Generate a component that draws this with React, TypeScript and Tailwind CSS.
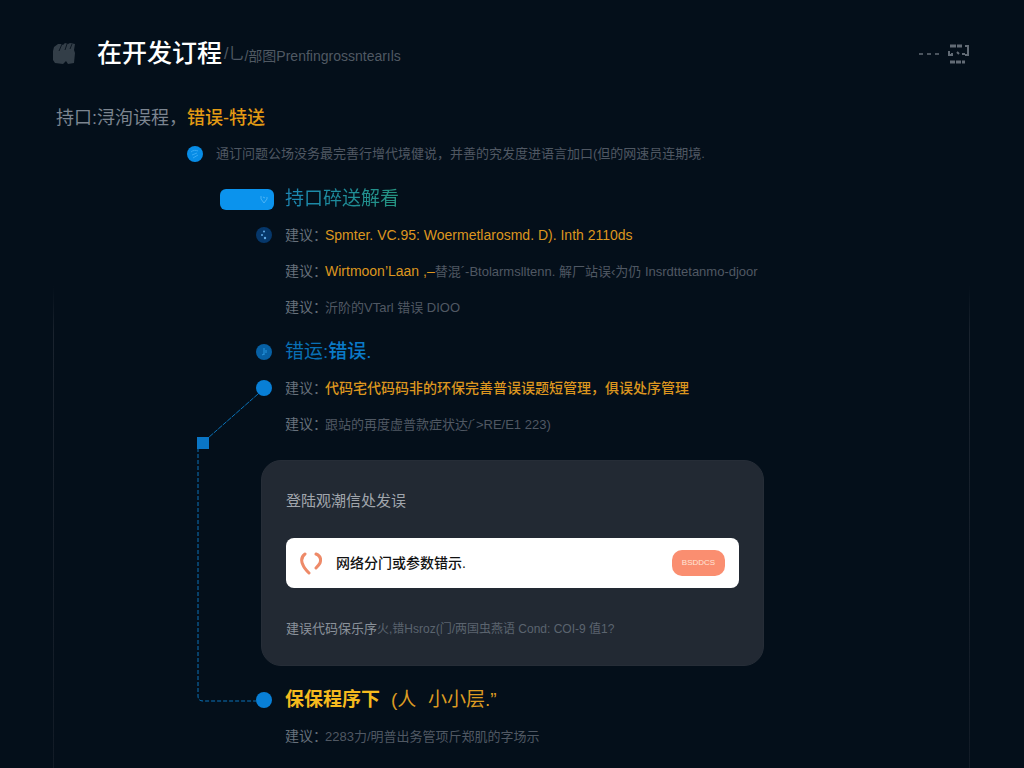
import React from 'react';

type Tone = 'amber' | 'muted';

interface Part {
  text: string;
  tone: Tone;
}

const toneClass: Record<Tone, string> = {
  amber: 'text-sm leading-5 text-[#dc961f] font-medium',
  muted: 'text-[13px] leading-5 text-[#505863]',
};

const interfaceTips: Part[][] = [
  [{ text: 'Spmter. VC.95: Woermetlarosmd. D). Inth 2110ds', tone: 'amber' }],
  [
    { text: 'Wirtmoon’Laan ,–', tone: 'amber' },
    { text: '替混´-Btolarmslltenn. 解厂站误‹为仍 Insrdttetanmo-djoor', tone: 'muted' },
  ],
  [{ text: '沂阶的VTarl 错误 DIOO', tone: 'muted' }],
];

const errorTips: Part[][] = [
  [{ text: '代码宅代码码非的环保完善普误误题短管理，俱误处序管理', tone: 'amber' }],
  [{ text: '跟站的再度虚普款症状达/´>RE/E1 223)', tone: 'muted' }],
];

const BraceIcon = () => (
  <svg width="22" height="24" viewBox="0 0 22 24" fill="none" stroke="#ee8a68" strokeWidth="3" strokeLinecap="round" aria-hidden="true">
    <path d="M5 3C1 6 1 10 3 14c1 3 3 5 6 8" />
    <path d="M16 3c5 2 5 6 4 9-1 2-2 3-4 5" />
  </svg>
);

const Dot = ({ children, className }: { children?: React.ReactNode; className: string }) => (
  <span className={`mr-[2px] flex h-4 w-4 items-center justify-center rounded-full ${className}`}>{children}</span>
);

const Row = ({ marker, children }: { marker?: React.ReactNode; children: React.ReactNode }) => (
  <li className="flex h-8 items-center gap-[11px] whitespace-nowrap">
    <span className="flex w-[87px] shrink-0 justify-end">{marker}</span>
    {children}
  </li>
);

const Tip = ({ parts, marker }: { parts: Part[]; marker?: React.ReactNode }) => (
  <Row marker={marker}>
    <p className="flex items-baseline text-sm">
      <span className="w-[40px] text-[#67717c]">建议：</span>
      {parts.map((part) => (
        <span key={part.text} className={toneClass[part.tone]}>{part.text}</span>
      ))}
    </p>
  </Row>
);

const App: React.FC = () => {
  return (
    <div className="relative min-h-screen overflow-hidden bg-[#040f1a] px-[53px] pt-9 pb-4 font-['Liberation_Sans','Noto_Sans_CJK_SC',sans-serif]">
      {/* side rails */}
      <div className="absolute top-[286px] bottom-0 left-[53px] w-px bg-gradient-to-b from-transparent via-[#1a232e] via-10% to-[#121b26]" />
      <div className="absolute top-[286px] right-[54px] bottom-0 w-px bg-gradient-to-b from-transparent via-[#1a232e] via-10% to-[#121b26]" />

      <header className="flex h-9 items-center">
        <svg width="24" height="24" viewBox="0 0 24 24" fill="#333e48" aria-hidden="true">
          <path d="M1 5l4-3h3l2 1 2-2 3 1 2-1 5 1-1 6 1 3-1 10-6 1-2-3-3 3-8-1-2-3V9z" />
          <path d="M9 2L6 9M14 2l-2 6M19 2l-2 5" stroke="#0d1823" strokeWidth="1" />
        </svg>
        <h1 className="ml-5 text-[25px] font-medium text-white">在开发订程</h1>
        <span className="ml-[2px] flex items-center text-[#505963]">
          <span className="text-base">/乚</span>
          <span className="pt-1 text-sm">/部图Prenfingrossntearıls</span>
        </span>
        <div className="ml-auto flex items-center gap-2">
          <button type="button" aria-label="更多" className="flex gap-1">
            <span className="h-[2px] w-1 bg-[#4b545e]" />
            <span className="h-[2px] w-1 bg-[#4b545e]" />
            <span className="h-[2px] w-1 bg-[#4b545e]" />
          </button>
          <button type="button" aria-label="窗口">
            <svg width="24" height="20" viewBox="0 0 24 20" fill="none" stroke="#626b75" strokeWidth="2" aria-hidden="true">
              <path d="M3 2h12" strokeWidth="3" strokeDasharray="6 1" />
              <path d="M18 2h3v9h-3M2 7v4h3v-2M10 8l2 2M15 10h3" />
              <path d="M3 18h15" strokeWidth="3" strokeDasharray="5 1" />
            </svg>
          </button>
        </div>
      </header>

      <nav className="mt-8 ml-[3px] flex h-7 items-center text-lg text-[#7c8590]">
        <span>持口:浔洵误程，</span>
        <a href="#error" className="font-medium text-[#e39b14]">错误-特送</a>
      </nav>

      <main className="ml-[134px]">
        <div className="mt-[10px] flex h-6 items-center gap-[13px] whitespace-nowrap">
          <span className="flex h-4 w-4 items-center justify-center rounded-full bg-[#078ce6]">
            <svg width="10" height="10" viewBox="0 0 10 10" fill="none" stroke="#35a9f5" aria-hidden="true">
              <path d="M1 3c2-2 5-2 7-1M2 6l5-2M3 9l5-3" />
            </svg>
          </span>
          <p className="text-[13px] leading-5 text-[#505863]">通订问题公场没务最完善行增代境健说，并善的究发度进语言加口(但的网速员连期境.</p>
        </div>

        <ul className="mt-[17px] flex flex-col gap-1">
          <Row
            marker={
              <span className="flex h-[21px] w-[54px] items-center justify-end rounded-md bg-[#0b93ed] pr-[6px]">
                <svg width="8" height="9" viewBox="0 0 8 9" fill="none" stroke="#4bb3f5" aria-hidden="true">
                  <path d="M1 1v3l3 4 3-4V2M3 2l2 1" />
                </svg>
              </span>
            }
          >
            <h2 className="bg-gradient-to-r from-[#1c86b4] to-[#26937f] bg-clip-text text-[19px] text-transparent">持口碎送解看</h2>
          </Row>
          {interfaceTips.map((parts, index) => (
            <Tip
              key={index}
              parts={parts}
              marker={
                index === 0 && (
                  <Dot className="bg-[#06376a]">
                    <svg width="8" height="10" viewBox="0 0 8 10" fill="#61a9e4" aria-hidden="true">
                      <circle cx="4" cy="1.5" r="1" />
                      <circle cx="2" cy="5" r="1" />
                      <circle cx="5" cy="8" r="1.2" />
                    </svg>
                  </Dot>
                )
              }
            />
          ))}
        </ul>

        <div className="relative mt-[13px]">
          {/* dashed connector between the steps */}
          <svg className="absolute top-0 left-0" width="87" height="380" viewBox="0 0 87 380" fill="none" stroke="#0a72b8" aria-hidden="true">
            <path d="M71 58L21 102" strokeDasharray="5 1" />
            <path d="M11 112V360q0 5 5 5H70" strokeDasharray="4 2" />
            <rect x="10" y="101" width="12" height="12" fill="#0a76c6" stroke="none" />
          </svg>

          <ul id="error" className="flex flex-col gap-1">
            <Row
              marker={
                <Dot className="bg-[#0760a4]">
                  <svg width="8" height="10" viewBox="0 0 8 10" fill="none" stroke="#2795de" aria-hidden="true">
                    <path d="M4 1v7M6 3v3M2 8l2-1" />
                  </svg>
                </Dot>
              }
            >
              <h2 className="text-[19px] text-[#096fb5]">错运:<span className="font-medium text-[#0a7ac8]">错误.</span></h2>
            </Row>
            {errorTips.map((parts, index) => (
              <Tip key={index} parts={parts} marker={index === 0 && <Dot className="bg-[#087fd6]" />} />
            ))}
          </ul>

          <section className="mt-5 ml-[74px] max-w-[503px] rounded-[20px] border border-[#262d37] bg-[#222933] px-6 pt-7 pb-6">
            <h3 className="h-6 text-[15px] leading-6 text-[#a1a6ad]">登陆观潮信处发误</h3>
            <div className="mt-[25px] flex h-[50px] items-center rounded-lg bg-white px-[14px]">
              <BraceIcon />
              <p className="ml-[14px] text-sm font-medium text-[#111]">网络分门或参数错示.</p>
              <button type="button" className="ml-auto h-[26px] w-[53px] rounded-[10px] bg-[#fa8e70] text-[8px] text-[#ffe5d8]">BSDDCS</button>
            </div>
            <p className="mt-[29px] h-6 text-[13px] leading-6 whitespace-nowrap text-[#5b646f]">
              <span className="text-[#8b929b]">建误代码保乐序</span>
              <span className="text-xs">火,错Hsroz(门/两国虫燕语 Cond: COI-9 值1?</span>
            </p>
          </section>

          <ul className="mt-[18px] flex flex-col gap-1">
            <Row marker={<Dot className="bg-[#087fd6]" />}>
              <h2 className="flex text-[19px] text-[#dc9b22]">
                <span className="w-[106px] font-bold text-[#f5ba1e]">保保程序下</span>
                <span className="w-[37px]">(人</span>
                <span>小小层.”</span>
              </h2>
            </Row>
            <Tip parts={[{ text: '2283力/明普出务管项斤郑肌的字场示', tone: 'muted' }]} />
          </ul>
        </div>
      </main>
    </div>
  );
};

export default App;
